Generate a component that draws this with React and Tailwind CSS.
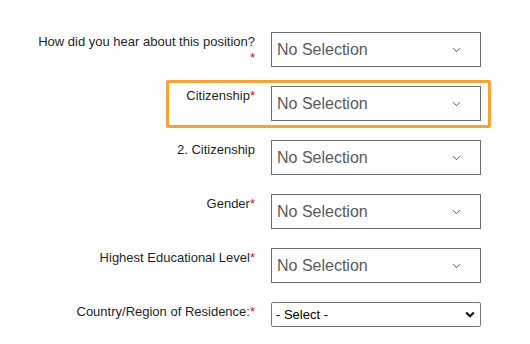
import React from "react";

const font = { fontFamily: '"Liberation Sans", Arial, sans-serif' };

function Star() {
  return <span className="text-[#c8102e]">*</span>;
}

function Chevron() {
  return (
    <svg width="9" height="6" viewBox="0 0 9 6" className="shrink-0">
      <path d="M1 1.2 L4.5 4.7 L8 1.2" fill="none" stroke="#555" strokeWidth="1" />
    </svg>
  );
}

function Box() {
  return (
    <div className="w-[210px] h-[35px] border border-[#6a6d70] flex items-center justify-between pl-[5px] pr-[19px] bg-white">
      <span className="text-[16px] leading-none text-[#5a5a5a]">No Selection</span>
      <Chevron />
    </div>
  );
}

function Row({ label, children, overlay }) {
  return (
    <div className="relative flex items-start gap-[16px] pl-[35px]">
      {overlay}
      <div className="w-[220px] text-right text-[13px] leading-[16px] text-[#1f1f1f] pt-[2px]">
        {label}
      </div>
      {children}
    </div>
  );
}

export default function App() {
  return (
    <div className="w-[530px] h-[344px] bg-white overflow-hidden" style={font}>
      <div className="flex flex-col gap-[19px] pt-[32px]">
        <Row
          label={
            <>
              How did you hear about this position?
              <br />
              <Star />
            </>
          }
        >
          <Box />
        </Row>
        <Row
          label={
            <>
              Citizenship
              <Star />
            </>
          }
          overlay={
            <div className="absolute left-[166px] top-[-6px] w-[325px] h-[48px] border-[3px] border-[#f2a33a] rounded-[2px] pointer-events-none" />
          }
        >
          <Box />
        </Row>
        <Row label="2. Citizenship">
          <Box />
        </Row>
        <Row
          label={
            <>
              Gender
              <Star />
            </>
          }
        >
          <Box />
        </Row>
        <Row
          label={
            <>
              Highest Educational Level
              <Star />
            </>
          }
        >
          <Box />
        </Row>
        <Row
          label={
            <>
              Country/Region of Residence:
              <Star />
            </>
          }
        >
          <div className="w-[210px] h-[25px] border border-[#767676] rounded-[2px] flex items-center justify-between pl-[4px] pr-[5px] bg-white">
            <span className="text-[13px] leading-none text-black">- Select -</span>
            <svg width="10" height="7" viewBox="0 0 10 7">
              <path d="M1.2 1.5 L5 5.3 L8.8 1.5" fill="none" stroke="#111" strokeWidth="2" />
            </svg>
          </div>
        </Row>
      </div>
    </div>
  );
}
